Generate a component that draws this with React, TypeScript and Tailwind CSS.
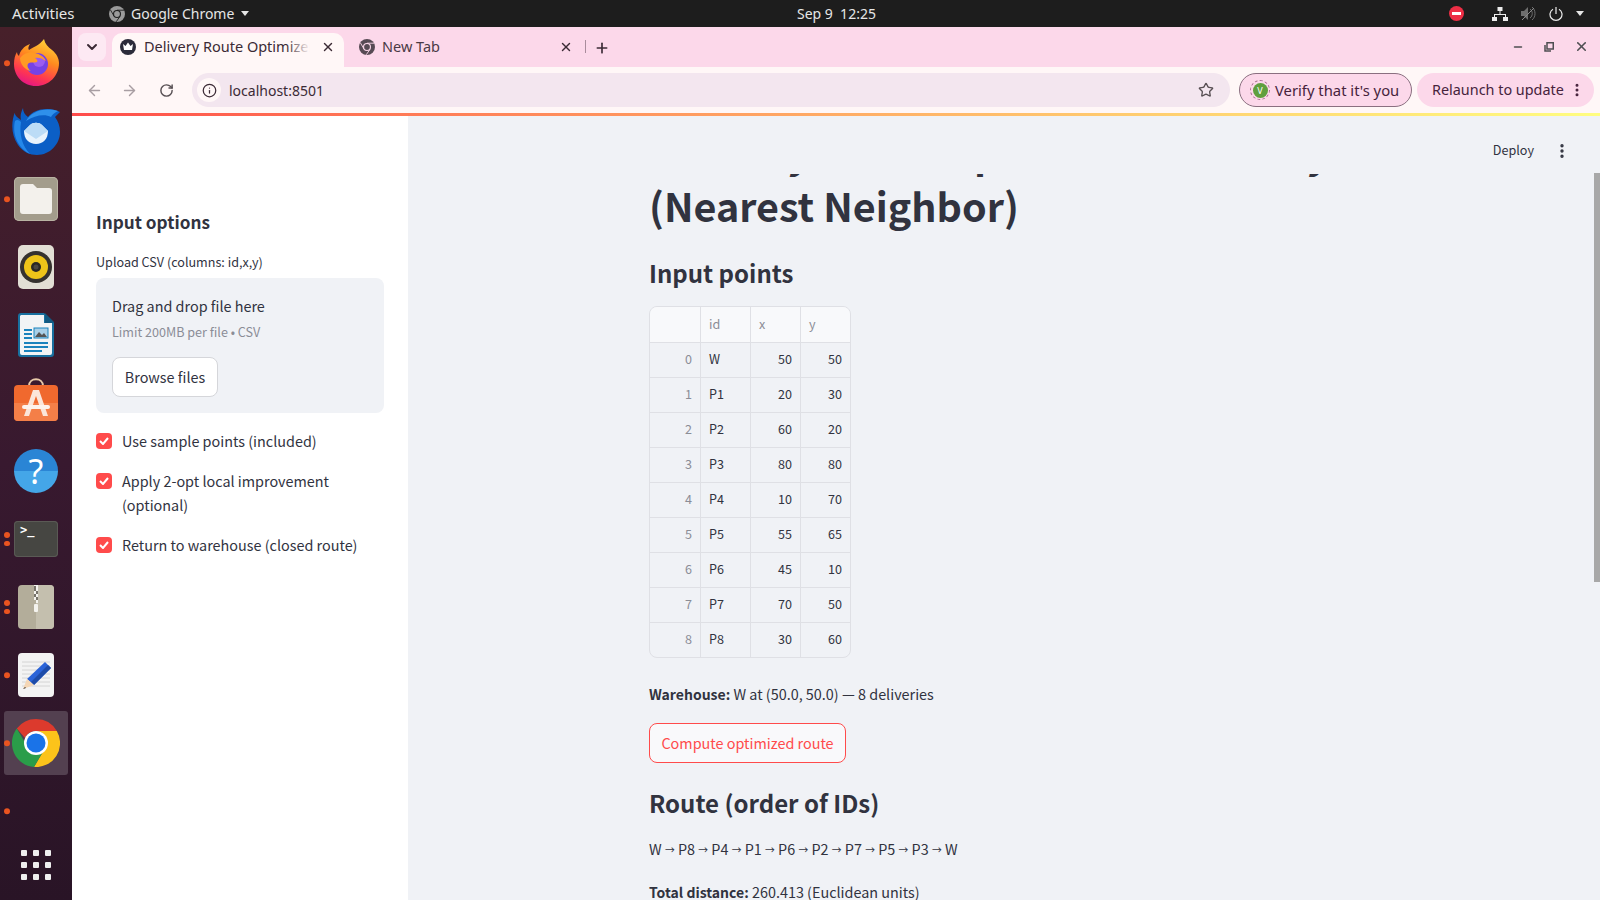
import { ArrowLeft, ArrowRight, ChevronDown, EllipsisVertical, Info, Minus, Plus, RotateCw, Star, X } from "lucide-react";

const points = [
  ["W", 50, 50],
  ["P1", 20, 30],
  ["P2", 60, 20],
  ["P3", 80, 80],
  ["P4", 10, 70],
  ["P5", 55, 65],
  ["P6", 45, 10],
  ["P7", 70, 50],
  ["P8", 30, 60],
] as const;

const route = ["W", "P8", "P4", "P1", "P6", "P2", "P7", "P5", "P3", "W"];

const cellClass = "flex items-center border-r border-[#dfe0e5] px-2 pb-px last:border-r-0";

function Firefox() {
  return (
    <svg className="-mt-[3px]" width="46" height="48" viewBox="0 0 46 48">
      <defs>
        <linearGradient id="ff" x1="0.7" y1="0" x2="0.3" y2="1">
          <stop offset="0" stopColor="#ffd43a" />
          <stop offset="0.4" stopColor="#ff8a1f" />
          <stop offset="0.75" stopColor="#ff3750" />
          <stop offset="1" stopColor="#e31587" />
        </linearGradient>
      </defs>
      <path d="M31 1c1 5 4 8 8 11 5 4 7 9 7 13 0 13-10 23-23 23S1 38 1 26c0-5 1-9 3-12 0 2 1 3 2 4 1-5 5-10 11-12-2 3-2 5-1 6 4-3 10-4 15-11z" fill="url(#ff)" />
      <circle cx="24" cy="26" r="11" fill="#7542e5" />
      <circle cx="26" cy="23" r="6" fill="#9b5cf0" />
      <path d="M7 20c4-5 10-7 15-5 5 1 9 4 11 8-4-3-8-4-11-3 2 1 3 3 2 4-3 1-6 0-8 1-3 2-1 6 2 8-6-1-11-7-11-13z" fill="#ff9a24" />
    </svg>
  );
}

function Thunderbird() {
  return (
    <svg width="48" height="48" viewBox="0 0 48 48">
      <path d="M11 1C9 5 8 9 9 13 4 10 2 7 3 5-1 15-1 28 6 38c5 7 12 10 19 10 13 0 23-11 23-23 0-6-2-11-5-15l5-5c-4-2-8-3-13-3C26 2 20 5 16 10c-3-2-5-5-5-9z" fill="#0b5fc6" />
      <path d="M3 14C0 26 5 41 18 47 10 39 7 27 9 15c-2-2-4-3-6-1z" fill="#2488ea" />
      <path d="M14 14C19 5 31 0 46 4c-4 2-6 4-7 6-6-3-16-2-25 4z" fill="#2f90ea" />
      <path d="M12 24l6-6c3-3 9-3 12 0l6 6c0 8-5 13-12 13s-12-5-12-13z" fill="#e8f3fc" />
      <path d="M12 24l6-6c3-3 9-3 12 0l6 6-12 8z" fill="#bcdcf6" />
    </svg>
  );
}

function Files() {
  return (
    <div className="flex h-11 w-11 items-center justify-center rounded-[5px] bg-[#a39d8c] shadow-[inset_0_0_0_1px_#b9b3a3]">
      <svg width="32" height="30" viewBox="0 0 32 30">
        <path d="M0 3a3 3 0 0 1 3-3h10l4 4h12a3 3 0 0 1 3 3v20a3 3 0 0 1-3 3H3a3 3 0 0 1-3-3z" fill="#f3f1ec" />
      </svg>
    </div>
  );
}

function Rhythmbox() {
  return (
    <div className="flex h-11 w-9 items-center justify-center rounded-[5px] bg-[#e2dfd5]">
      <svg width="32" height="32" viewBox="0 0 32 32">
        <circle cx="16" cy="16" r="16" fill="#35322f" />
        <circle cx="16" cy="16" r="12" fill="#eec419" />
        <circle cx="16" cy="16" r="5" fill="#2a2724" />
        <circle cx="16" cy="16" r="2.5" fill="#4a4642" />
      </svg>
    </div>
  );
}

function Writer() {
  return (
    <svg width="36" height="44" viewBox="0 0 36 44">
      <path d="M3 0h23l10 10v31a3 3 0 0 1-3 3H3a3 3 0 0 1-3-3V3a3 3 0 0 1 3-3z" fill="#18709f" />
      <path d="M3 2h23v8h8v30a2 2 0 0 1-2 2H4a2 2 0 0 1-2-2V3z" fill="#f2f4f5" />
      <path d="M27 0l9 9v1h-9z" fill="#125a82" />
      <path d="M6 16h8v2H6zm0 4h8v2H6zm0 4h8v2H6zM6 29h24v2H6zm0 4h24v2H6zm0 4h18v2H6z" fill="#1a83bd" />
      <rect x="16" y="15" width="14" height="10" fill="#a9d0e8" stroke="#1a83bd" />
      <path d="M17 24l4-5 3 3 2-2 3 4z" fill="#555" />
    </svg>
  );
}

function Software() {
  return (
    <svg className="-mt-[6px]" width="44" height="44" viewBox="0 0 44 44">
      <path d="M15 8c0-9 14-9 14 0" fill="none" stroke="#e7c9a9" strokeWidth="2" />
      <rect y="7" width="44" height="36" rx="4" fill="#f0692e" />
      <path d="M0 25h44v14a4 4 0 0 1-4 4H4a4 4 0 0 1-4-4z" fill="#f47f48" />
      <path d="M19 12h6l9 26h-5l-7-20-7 20h-5z" fill="#fbe6d9" />
      <rect x="8" y="27" width="28" height="4" rx="2" fill="#fdf3ec" />
    </svg>
  );
}

function Help() {
  return (
    <div className="flex h-11 w-11 items-center justify-center rounded-full bg-gradient-to-b from-[#2a85d5] from-50% to-[#44a6e8] to-50% font-['Noto_Sans',sans-serif] text-[34px] leading-[44px] text-white">
      ?
    </div>
  );
}

function Terminal() {
  return (
    <div className="h-9 w-11 rounded-[4px] bg-[#464642] pl-[6px] pt-[2px] font-['DejaVu_Sans_Mono',monospace] text-[12px] font-bold leading-[14px] text-white shadow-[inset_0_0_0_1px_#5a5a55]">
      {">_"}
    </div>
  );
}

function Archive() {
  return (
    <svg width="36" height="44" viewBox="0 0 36 44">
      <rect width="36" height="44" rx="4" fill="#b3ad9a" />
      <path d="M18 0h14a4 4 0 0 1 4 4v36a4 4 0 0 1-4 4H18z" fill="#c4bfae" />
      <path d="M16 0h4v3h-4zm2 3h2v3h-2zm-2 3h2v3h-2zm2 3h2v3h-2zm-2 3h2v3h-2zm2 3h2v3h-2z" fill="#f4f3ee" />
      <path d="M16 1h2v2h-2zm2 2h-2v3h2zm2 3h-2v3h2zm-2 3h-2v3h2zm2 3h-2v3h2z" fill="#77736a" />
      <rect x="16" y="19" width="4" height="8" rx="1" fill="#f4f3ee" />
    </svg>
  );
}

function Editor() {
  return (
    <svg width="36" height="44" viewBox="0 0 36 44">
      <rect width="36" height="44" rx="4" fill="#f3f3f3" />
      <path d="M4 9h28M4 13h28M4 17h28M4 21h28M4 25h28M4 29h28M4 33h28" stroke="#d4d4d4" />
      <path d="M27 9l6 6-17 17-7-6z" fill="#2a63d8" />
      <path d="M30 12l3 3-17 17-3-3z" fill="#1d4ba8" />
      <path d="M9 26l7 6-11 4z" fill="#f4d6b5" />
      <path d="M7 34l-2 2 3-1z" fill="#333" />
    </svg>
  );
}

function ChromeLogo({ size }: { size: number }) {
  return (
    <svg width={size} height={size} viewBox="0 0 48 48">
      <path d="M24 0a24 24 0 0 1 20.8 12H24a12 12 0 0 0-11 7L4.8 9.6A24 24 0 0 1 24 0z" fill="#dc3a2d" />
      <path d="M44.8 12A24 24 0 0 1 22 48l10-17a12 12 0 0 0 2-12 12 12 0 0 0-10-7z" fill="#fcc31a" />
      <path d="M4.8 9.6L15 27a12 12 0 0 0 17 4L22 48A24 24 0 0 1 4.8 9.6z" fill="#2a9d49" />
      <circle cx="24" cy="24" r="12" fill="#fff" />
      <circle cx="24" cy="24" r="9.5" fill="#1a73e8" />
    </svg>
  );
}

function ChromeMono({ fg, bg }: { fg: string; bg: string }) {
  return (
    <svg width="16" height="16" viewBox="0 0 16 16">
      <circle cx="8" cy="8" r="8" fill={fg} />
      <path d="M8 4.2h7M5 10L1.5 4M10.8 10.6L7.2 15.8" stroke={bg} strokeWidth="0.9" />
      <circle cx="8" cy="8" r="4" fill={bg} />
      <circle cx="8" cy="8" r="2.9" fill={fg} />
    </svg>
  );
}

function DockItem({ dots = 0, active = false, children }: { dots?: number; active?: boolean; children?: React.ReactNode }) {
  return (
    <div className="relative flex h-[68px] w-[72px] shrink-0 items-center justify-center">
      {active && <div className="absolute inset-x-1 top-0 h-16 translate-y-[2px] rounded-[3px] bg-[#534050]" />}
      {dots > 0 && (
        <div className="absolute left-1 top-1/2 flex -translate-y-1/2 flex-col gap-[3px]">
          {Array.from({ length: dots }).map((_, i) => (
            <span key={i} className="h-[5.5px] w-[5.5px] rounded-full bg-[#e95420]" />
          ))}
        </div>
      )}
      <div className="relative flex items-center justify-center">{children}</div>
    </div>
  );
}

function Dock() {
  return (
    <div className="flex h-full w-[72px] shrink-0 flex-col bg-gradient-to-b from-[#47202a] via-[#38192f] to-[#291426] pt-[2px]">
      <DockItem dots={1}><Firefox /></DockItem>
      <DockItem><Thunderbird /></DockItem>
      <DockItem dots={1}><Files /></DockItem>
      <DockItem><Rhythmbox /></DockItem>
      <DockItem><Writer /></DockItem>
      <DockItem><Software /></DockItem>
      <DockItem><Help /></DockItem>
      <DockItem dots={2}><Terminal /></DockItem>
      <DockItem dots={2}><Archive /></DockItem>
      <DockItem dots={1}><Editor /></DockItem>
      <DockItem dots={1} active><ChromeLogo size={48} /></DockItem>
      <DockItem dots={1} />
      <div className="mx-auto mt-[5px] grid w-[30px] grid-cols-3 gap-[6px]">
        {Array.from({ length: 9 }).map((_, i) => (
          <span key={i} className="h-[6px] w-[6px] rounded-[1px] bg-[#efefef]" />
        ))}
      </div>
    </div>
  );
}

function TopBar() {
  return (
    <div className="flex h-[27px] shrink-0 items-center bg-[#1d1d1d] font-['Noto_Sans',sans-serif] text-[14px] text-[#e6e6e6]">
      <span className="ml-3 w-[97px] text-[15px]">Activities</span>
      <ChromeMono fg="#9a9a9a" bg="#1d1d1d" />
      <span className="ml-[6px] w-[105px] whitespace-nowrap">Google Chrome</span>
      <span className="ml-[5px] h-0 w-0 border-x-[4.5px] border-t-[5px] border-x-transparent border-t-[#e6e6e6]" />
      <span className="ml-[548px] whitespace-pre">Sep 9  12:25</span>
      <span className="ml-auto flex h-[15px] w-[15px] items-center justify-center rounded-full bg-[#ed2e45]">
        <span className="h-[2.5px] w-[9px] bg-white" />
      </span>
      <svg className="ml-[28px]" width="16" height="14" viewBox="0 0 16 14" fill="#ececec">
        <rect x="5.5" y="0" width="5" height="4" />
        <rect x="0" y="10" width="5" height="4" />
        <rect x="11" y="10" width="5" height="4" />
        <path d="M7.5 4h1v3H14v3h-1V8H3v2H2V7h5.5z" />
      </svg>
      <svg className="ml-[13px]" width="15" height="15" viewBox="0 0 15 15" fill="#6e6e6e">
        <path d="M0 5h3l4-4v13l-4-4H0z" />
        <path d="M9 3c3 2 3 7 0 9M11 1c4 3 4 10 0 13" fill="none" stroke="#6e6e6e" />
        <path d="M1 14L13 2" stroke="#8a8a8a" />
      </svg>
      <svg className="ml-[13px]" width="14" height="14" viewBox="0 0 14 14" fill="none" stroke="#ececec" strokeWidth="1.2">
        <path d="M4 2.2a6 6 0 1 0 6 0M7 0v7" />
      </svg>
      <span className="ml-[13px] mr-4 h-0 w-0 border-x-[4.5px] border-t-[5px] border-x-transparent border-t-[#e6e6e6]" />
    </div>
  );
}

function TabStrip() {
  return (
    <div className="flex h-10 shrink-0 items-end bg-[#fcd8ea] font-['Noto_Sans',sans-serif] text-[14.5px] text-[#3b2a35]">
      <div className="mb-[6px] ml-[6px] flex h-7 w-7 items-center justify-center rounded-lg bg-[#fde9f3]">
        <ChevronDown size={16} strokeWidth={3} />
      </div>
      <div className="ml-[6px] flex h-[34px] w-[232px] items-center rounded-t-[10px] bg-[#fff7f7] pb-[6px] pl-[8px] pr-[9px]">
        <svg width="16" height="16" viewBox="0 0 16 16">
          <circle cx="8" cy="8" r="8" fill="#2b2b3a" />
          <path d="M3 5l2.5 2L8 3.5 10.5 7 13 5l-1 6H4z" fill="#fff" />
        </svg>
        <span className="relative ml-[8px] w-[166px] overflow-hidden whitespace-nowrap">
          Delivery Route Optimizer
          <span className="absolute inset-y-0 right-0 w-6 bg-gradient-to-r from-transparent to-[#fff7f7]" />
        </span>
        <X className="ml-auto" size={14} strokeWidth={2.5} />
      </div>
      <div className="flex h-[34px] w-[241px] items-center pb-[6px] pl-[15px] pr-[12px]">
        <ChromeMono fg="#574a54" bg="#fcd8ea" />
        <span className="ml-[7px] text-[#4a3a45]">New Tab</span>
        <X className="ml-auto" size={14} strokeWidth={2.5} />
      </div>
      <div className="mb-[14px] h-[13px] w-px bg-[#a98c9c]" />
      <Plus className="mb-[11px] ml-[8px]" size={16} strokeWidth={2.5} />
      <div className="mb-[13px] ml-auto flex items-center gap-[20px] pr-[11px] text-[#4e4e52]">
        <Minus size={12} strokeWidth={3} />
        <svg width="10" height="10" viewBox="0 0 10 10" fill="none" stroke="#4e4e52" strokeWidth="1.5">
          <rect x="3" y="0.75" width="6.25" height="6.25" />
          <path d="M1 3v6h6" />
        </svg>
        <X size={15} strokeWidth={2.5} />
      </div>
    </div>
  );
}

function Toolbar() {
  return (
    <div className="flex h-[46px] shrink-0 items-center bg-[#fff7f7] pl-[14px] pr-[6px] font-['Noto_Sans',sans-serif] text-[14px] text-[#46233c]">
      <ArrowLeft size={17} className="text-[#a89ea3]" />
      <ArrowRight size={17} className="ml-[18px] text-[#a89ea3]" />
      <RotateCw size={15} strokeWidth={2.3} className="ml-[21px] text-[#574f53]" />
      <div className="ml-[18px] flex h-[34px] w-[1038px] items-center rounded-full bg-[#f3e6ef] pl-[5px] pr-4">
        <span className="flex h-6 w-6 items-center justify-center rounded-full bg-[#fff7f7] text-[#3b2a35]">
          <Info size={15} strokeWidth={2} />
        </span>
        <span className="ml-[8px] text-[#3b2a35]">localhost:8501</span>
        <Star className="ml-auto text-[#574f53]" size={16} strokeWidth={2} />
      </div>
      <div className="ml-[9px] flex h-[34px] w-[173px] items-center rounded-full border border-[#8a6f80] bg-[#fcd8ea] pl-[10px] text-[14.8px]">
        <span className="flex h-5 w-5 items-center justify-center rounded-full border border-dashed border-[#a86b90]">
          <span className="flex h-[15px] w-[15px] items-center justify-center rounded-full bg-[#5f9f3e] text-[9px] leading-none text-white">V</span>
        </span>
        <span className="ml-[5px] whitespace-nowrap">Verify that it's you</span>
      </div>
      <div className="ml-[5px] flex h-[34px] w-[177px] items-center rounded-full bg-[#fcd8ea] pl-[15px] text-[14.4px]">
        <span className="whitespace-nowrap">Relaunch to update</span>
        <EllipsisVertical className="ml-auto mr-[9px]" size={16} strokeWidth={2.5} />
      </div>
    </div>
  );
}

function Check({ children }: { children: React.ReactNode }) {
  return (
    <div className="flex items-start gap-[10px]">
      <span className="mt-1 flex h-4 w-4 shrink-0 items-center justify-center rounded-[4px] bg-[#ff4b4b]">
        <svg width="10" height="8" viewBox="0 0 10 8" fill="none" stroke="#fff" strokeWidth="2">
          <path d="M1 4l3 3 5-6" />
        </svg>
      </span>
      <span className="text-[14.4px] leading-6">{children}</span>
    </div>
  );
}

function Sidebar() {
  return (
    <div className="w-[336px] shrink-0 bg-white px-6 pt-[92px] text-[#31333f]">
      <h2 className="text-[17.2px] font-semibold leading-[28px]">Input options</h2>
      <p className="mt-[15px] text-[12.6px] leading-[22px]">Upload CSV (columns: id,x,y)</p>
      <div className="mt-[5px] h-[135px] rounded-lg bg-[#f0f2f6] px-4 pt-4">
        <p className="text-[14.4px] leading-6">Drag and drop file here</p>
        <p className="mt-[3px] text-[12.6px] leading-[22px] text-[#8b8d96]">Limit 200MB per file • CSV</p>
        <button className="mt-[14px] h-10 w-[106px] rounded-lg border border-[#d5d6da] bg-white pb-px text-[14.4px]">Browse files</button>
      </div>
      <div className="mt-4 flex flex-col gap-4">
        <Check>Use sample points (included)</Check>
        <Check>Apply 2-opt local improvement (optional)</Check>
        <Check>Return to warehouse (closed route)</Check>
      </div>
    </div>
  );
}

function PointsTable() {
  return (
    <div className="mt-[13px] w-[202px] overflow-hidden rounded-lg border border-[#dfe0e5] text-[12.6px]">
      <div className="grid h-[35px] grid-cols-[51px_50px_50px_1fr] bg-[#f8f9fb] text-[#8b8d96]">
        <div className={cellClass} />
        <div className={cellClass}>id</div>
        <div className={cellClass}>x</div>
        <div className={cellClass}>y</div>
      </div>
      {points.map(([id, x, y], i) => (
        <div key={id} className="grid h-[35px] grid-cols-[51px_50px_50px_1fr] border-t border-[#dfe0e5]">
          <div className={`${cellClass} justify-end text-[#8b8d96]`}>{i}</div>
          <div className={cellClass}>{id}</div>
          <div className={`${cellClass} justify-end`}>{x}</div>
          <div className={`${cellClass} justify-end`}>{y}</div>
        </div>
      ))}
    </div>
  );
}

function MainArea() {
  return (
    <div className="relative min-w-0 flex-1 overflow-hidden bg-[#f0f2f6] text-[#31333f]">
      <div className="mx-auto mt-[9px] w-[710px]">
        <h1 className="text-[39.5px] font-bold leading-[53px]">
          Delivery Route Optimizer — Greedy
          <br />
          (Nearest Neighbor)
        </h1>
        <h2 className="mt-[22px] text-[24px] font-semibold leading-[40px]">Input points</h2>
        <PointsTable />
        <p className="mt-6 text-[14.4px] leading-6">
          <strong className="text-[14px] font-semibold">Warehouse:</strong> W at (50.0, 50.0) — 8 deliveries
        </p>
        <button className="mt-[17px] h-10 w-[197px] rounded-lg border border-[#ff4b4b] bg-[#f9f9fb] text-[14.4px] text-[#ff4b4b]">
          Compute optimized route
        </button>
        <h2 className="mt-5 text-[24px] font-semibold leading-[40px]">Route (order of IDs)</h2>
        <p className="mt-[14px] text-[14.4px] leading-6">
          {route.map((id, i) => (
            <span key={i}>
              {i > 0 && (
                <>
                  {" "}
                  <span className="align-[1px] text-[9.8px]">→</span>{" "}
                </>
              )}
              {id}
            </span>
          ))}
        </p>
        <p className="mt-[18px] text-[14.4px] leading-6">
          <strong className="text-[14px] font-semibold">Total distance:</strong> 260.413 (Euclidean units)
        </p>
      </div>
      {/* streamlit header sits over the scrolled title */}
      <div className="absolute inset-x-0 top-0 flex h-[58px] items-center justify-end bg-[#f0f2f6] pr-[29px] pt-[11px] text-[12.6px]">
        <span>Deploy</span>
        <EllipsisVertical className="ml-[19px]" size={18} strokeWidth={2.5} />
      </div>
      <div className="absolute right-0 top-[57px] h-[409px] w-[6px] bg-[#a8a8a8]" />
    </div>
  );
}

export default function App() {
  return (
    <div className="flex h-[900px] w-[1600px] flex-col overflow-hidden font-['Noto_Sans_CJK_JP','Noto_Sans',sans-serif]">
      <TopBar />
      <div className="flex min-h-0 flex-1">
        <Dock />
        <div className="flex min-w-0 flex-1 flex-col">
          <TabStrip />
          <Toolbar />
          <div className="h-[3px] shrink-0 bg-gradient-to-r from-[#ff4b4b] to-[#fffd80]" />
          <div className="flex min-h-0 flex-1">
            <Sidebar />
            <MainArea />
          </div>
        </div>
      </div>
    </div>
  );
}
